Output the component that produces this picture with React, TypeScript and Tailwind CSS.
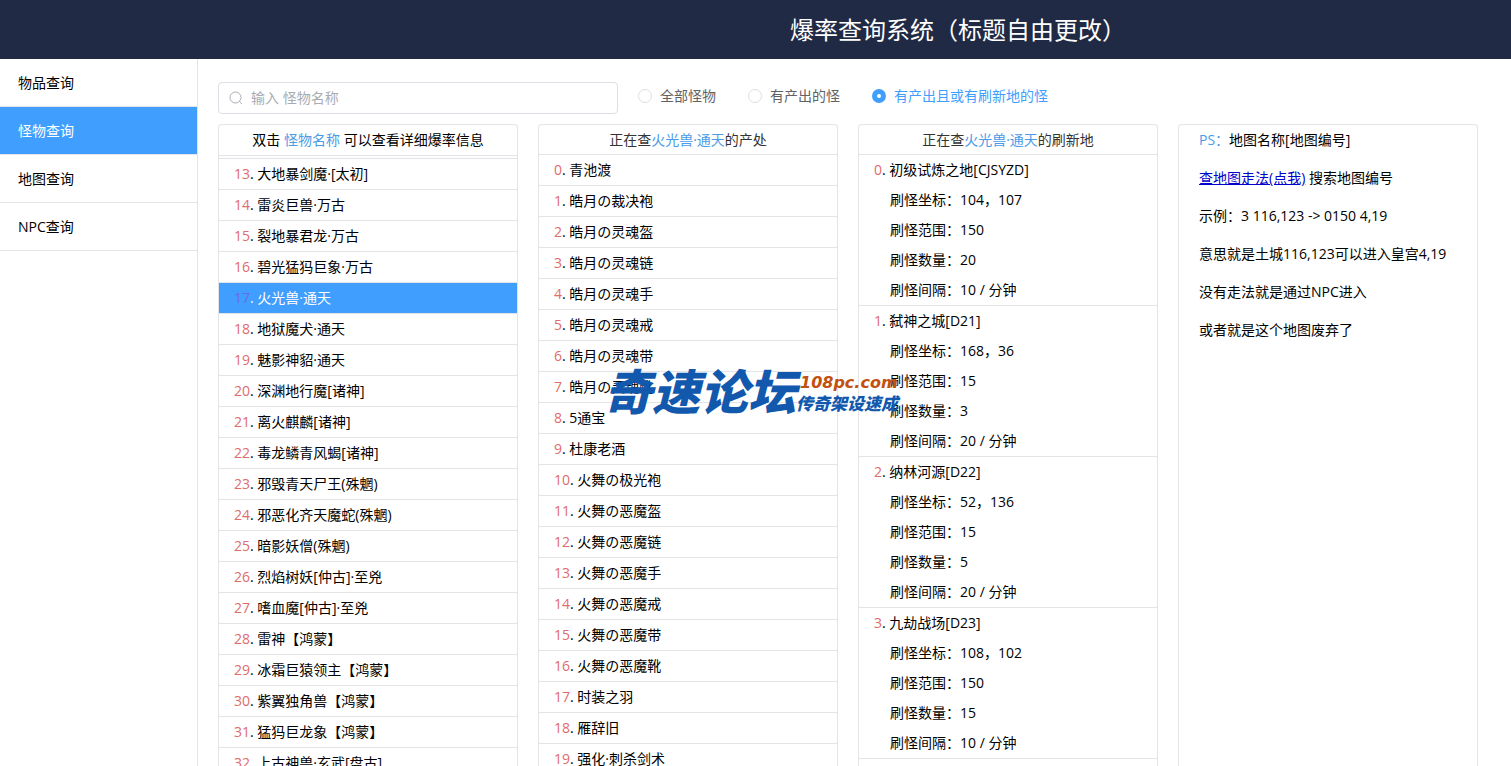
import { useState } from "react";

const navItems = ["物品查询", "怪物查询", "地图查询", "NPC查询"];

const filters = ["全部怪物", "有产出的怪", "有产出且或有刷新地的怪"];

const monsters = [
  "大地暴剑魔·[太初]",
  "雷炎巨兽·万古",
  "裂地暴君龙·万古",
  "碧光猛犸巨象·万古",
  "火光兽·通天",
  "地狱魔犬·通天",
  "魅影神貂·通天",
  "深渊地行魔[诸神]",
  "离火麒麟[诸神]",
  "毒龙鳞青风蝎[诸神]",
  "邪毁青天尸王(殊魍)",
  "邪恶化齐天魔蛇(殊魍)",
  "暗影妖僧(殊魍)",
  "烈焰树妖[仲古]·至兇",
  "嗜血魔[仲古]·至兇",
  "雷神【鸿蒙】",
  "冰霜巨猿领主【鸿蒙】",
  "紫翼独角兽【鸿蒙】",
  "猛犸巨龙象【鸿蒙】",
  "上古神兽·玄武[盘古]",
];
const firstMonsterIndex = 13;

const drops = [
  "青池渡",
  "皓月の裁决袍",
  "皓月の灵魂盔",
  "皓月の灵魂链",
  "皓月の灵魂手",
  "皓月の灵魂戒",
  "皓月の灵魂带",
  "皓月の灵魂靴",
  "5通宝",
  "杜康老酒",
  "火舞の极光袍",
  "火舞の恶魔盔",
  "火舞の恶魔链",
  "火舞の恶魔手",
  "火舞の恶魔戒",
  "火舞の恶魔带",
  "火舞の恶魔靴",
  "时装之羽",
  "雁辞旧",
  "强化·刺杀剑术",
];

const spawns = [
  { map: "初级试炼之地[CJSYZD]", x: 104, y: 107, range: 150, count: 20, interval: 10 },
  { map: "弑神之城[D21]", x: 168, y: 36, range: 15, count: 3, interval: 20 },
  { map: "纳林河源[D22]", x: 52, y: 136, range: 15, count: 5, interval: 20 },
  { map: "九劫战场[D23]", x: 108, y: 102, range: 150, count: 15, interval: 10 },
];

function Panel({ children }: { children: React.ReactNode }) {
  return (
    <section className="flex min-h-0 min-w-0 flex-col overflow-hidden rounded-t border border-b-0 border-[#e2e4e8]">
      {children}
    </section>
  );
}

function Index({ n, active = false }: { n: number; active?: boolean }) {
  return <span className={active ? "text-[#6a6ae6]" : "text-[#e06c6c]"}>{n}</span>;
}

function Watermark() {
  return (
    <div
      aria-hidden="true"
      className="pointer-events-none absolute top-[362px] left-[604px] flex items-center font-['Noto_Sans_CJK_SC',sans-serif] font-black whitespace-nowrap text-[#1259ae] italic"
    >
      <span className="text-[48px] leading-[54px]">奇速论坛</span>
      <span className="flex flex-col pt-2">
        <span className="pl-1 font-['DejaVu_Sans',sans-serif] text-base leading-5 font-bold text-[#c4500f]">
          108pc.com
        </span>
        <span className="text-[17px] leading-5">传奇架设速成</span>
      </span>
    </div>
  );
}

export default function App() {
  const [nav, setNav] = useState(1);
  const [filter, setFilter] = useState(2);
  const [selected, setSelected] = useState(4);
  const name = monsters[selected];

  return (
    <div className="relative flex h-screen flex-col overflow-hidden bg-white font-['Open_Sans','Noto_Sans_CJK_SC',sans-serif] text-sm text-black">
      <header className="flex h-[59px] shrink-0 items-center justify-center bg-[#212a45] pl-[405px]">
        <h1 className="text-2xl whitespace-nowrap text-white">爆率查询系统（标题自由更改）</h1>
      </header>

      <div className="flex min-h-0 flex-1">
        <nav className="w-[198px] shrink-0 border-r border-[#e2e4e8]">
          {navItems.map((item, i) => (
            <button
              key={item}
              type="button"
              onClick={() => setNav(i)}
              className={
                i === nav
                  ? "block h-12 w-full border-b border-[#e2e4e8] bg-[#409eff] px-[18px] text-left text-white"
                  : "block h-12 w-full border-b border-[#e2e4e8] px-[18px] text-left"
              }
            >
              {item}
            </button>
          ))}
        </nav>

        <main className="flex min-w-0 flex-1 flex-col pt-[23px] pr-[33px] pl-5">
          <div className="flex shrink-0 items-start gap-5">
            <label className="flex h-8 w-[400px] items-center gap-2 rounded border border-[#dcdfe6] px-[10px] text-[#a8abb2]">
              <svg viewBox="0 0 14 14" className="size-[14px] shrink-0" fill="none" stroke="currentColor">
                <circle cx="6.5" cy="6.5" r="5.5" />
                <path d="M10.5 10.5 13 13" />
              </svg>
              <input
                type="text"
                aria-label="怪物名称"
                placeholder="输入 怪物名称"
                className="min-w-0 flex-1 bg-transparent outline-none placeholder:text-[#a8abb2]"
              />
            </label>
            <div className="flex gap-8">
              {filters.map((label, i) => (
                <label
                  key={label}
                  className={
                    i === filter
                      ? "flex h-7 items-center gap-2 text-[#409eff]"
                      : "flex h-7 items-center gap-2 text-[#606266]"
                  }
                >
                  <input
                    type="radio"
                    name="filter"
                    checked={i === filter}
                    onChange={() => setFilter(i)}
                    className="size-[14px] appearance-none rounded-full border border-[#dcdfe6] bg-white checked:border-5 checked:border-[#409eff]"
                  />
                  {label}
                </label>
              ))}
            </div>
          </div>

          <div className="mt-[10px] grid min-h-0 flex-1 grid-cols-4 gap-5">
            <Panel>
              <h2 className="shrink-0 border-b border-[#e2e4e8] text-center leading-[30px]">
                双击 <span className="text-[#4a9be8]">怪物名称</span> 可以查看详细爆率信息
              </h2>
              <ul className="min-h-0 overflow-hidden">
                <li className="h-[3px] border-b border-[#e2e4e8]" />
                {monsters.map((monster, i) => (
                  <li key={monster} className="border-b border-[#e2e4e8]">
                    <button
                      type="button"
                      onClick={() => setSelected(i)}
                      className={
                        i === selected
                          ? "block w-full bg-[#409eff] px-[15px] text-left leading-[30px] text-white"
                          : "block w-full px-[15px] text-left leading-[30px]"
                      }
                    >
                      <Index n={firstMonsterIndex + i} active={i === selected} />. {monster}
                    </button>
                  </li>
                ))}
              </ul>
            </Panel>

            <Panel>
              <h2 className="shrink-0 border-b border-[#e2e4e8] text-center leading-[29px] text-[#333333]">
                正在查<span className="text-[#4a9be8]">{name}</span>的产处
              </h2>
              <ul className="min-h-0 overflow-hidden">
                {drops.map((drop, i) => (
                  <li key={drop} className="border-b border-[#e2e4e8] px-[15px] leading-[30px]">
                    <Index n={i} />. {drop}
                  </li>
                ))}
              </ul>
            </Panel>

            <Panel>
              <h2 className="shrink-0 border-b border-[#e2e4e8] text-center leading-[29px] text-[#333333]">
                正在查<span className="text-[#4a9be8]">{name}</span>的刷新地
              </h2>
              <ul className="min-h-0 overflow-hidden">
                {spawns.map((spawn, i) => (
                  <li key={spawn.map} className="border-b border-[#e2e4e8] px-[15px] leading-[30px]">
                    <p>
                      <Index n={i} />. {spawn.map}
                    </p>
                    <div className="pl-4">
                      <p>刷怪坐标：{spawn.x}，{spawn.y}</p>
                      <p>刷怪范围：{spawn.range}</p>
                      <p>刷怪数量：{spawn.count}</p>
                      <p>刷怪间隔：{spawn.interval} / 分钟</p>
                    </div>
                  </li>
                ))}
              </ul>
            </Panel>

            <Panel>
              <div className="flex flex-col gap-2 px-5 leading-[30px]">
                <p>
                  <span className="text-[#4a9be8]">PS：</span>地图名称[地图编号]
                </p>
                <p>
                  <a href="#maps" className="text-[#0000cc] underline">查地图走法(点我)</a> 搜索地图编号
                </p>
                <p>示例：3 116,123 -&gt; 0150 4,19</p>
                <p>意思就是土城116,123可以进入皇宫4,19</p>
                <p>没有走法就是通过NPC进入</p>
                <p>或者就是这个地图废弃了</p>
              </div>
            </Panel>
          </div>
        </main>
      </div>

      <Watermark />
    </div>
  );
}
